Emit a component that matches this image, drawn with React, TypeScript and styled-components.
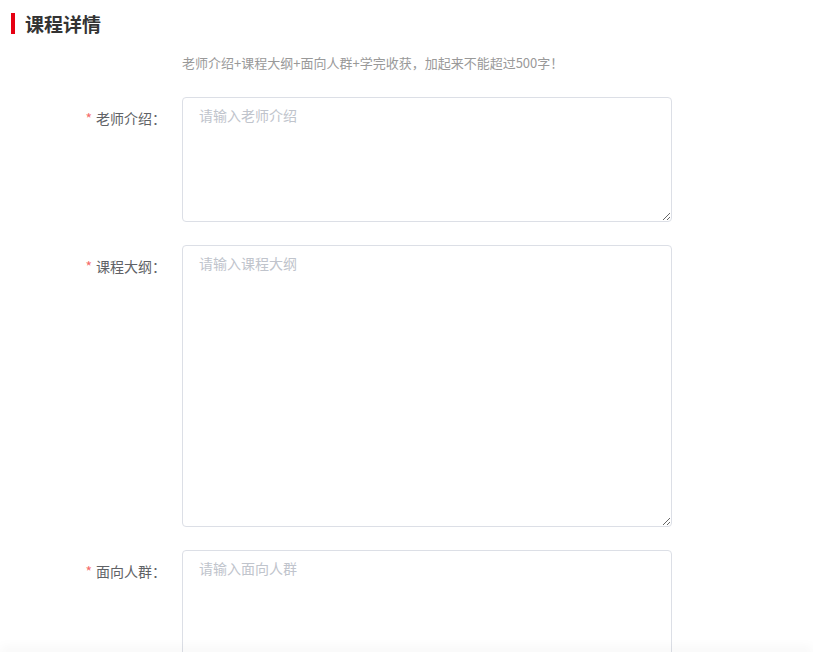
import React from 'react';
import styled, { createGlobalStyle } from 'styled-components';

const GlobalStyle = createGlobalStyle`
  html, body {
    margin: 0;
    padding: 0;
    background: #fff;
  }
  body {
    font-family: "Noto Sans CJK SC", "Liberation Sans", sans-serif;
  }
`;

const Page = styled.div`
  display: flex;
  flex-direction: column;
  height: 100vh;
  overflow: hidden;
`;

const Content = styled.div`
  flex: 1;
  overflow: hidden;
  padding-top: 13px;
`;

const Footer = styled.div`
  position: relative;
  z-index: 1;
  height: 7px;
  background: #fff;
  box-shadow: 0 -4px 12px rgba(0, 0, 0, 0.05);
`;

const SectionTitle = styled.h2`
  display: flex;
  align-items: center;
  gap: 10px;
  margin: 0 0 0 11px;
  font-size: 19px;
  line-height: 21px;
  font-weight: 700;
  color: #333;

  &::before {
    content: '';
    width: 4px;
    height: 21px;
    background: #e60012;
  }
`;

const Hint = styled.p`
  margin: 19px 0 0 182px;
  font-size: 13px;
  line-height: 20px;
  color: #999;
`;

const Form = styled.div`
  display: flex;
  flex-direction: column;
  gap: 23px;
  margin-top: 24px;
`;

const FormItem = styled.div`
  display: flex;
  align-items: flex-start;
`;

const Label = styled.label`
  width: 182px;
  box-sizing: border-box;
  padding-right: 16px;
  text-align: right;
  font-size: 14px;
  line-height: 42px;
  color: #606266;
`;

const Star = styled.span`
  color: #f56c6c;
  margin-right: 4px;
`;

const TextArea = styled.textarea<{ $h: number }>`
  display: block;
  width: 490px;
  height: ${(p) => p.$h}px;
  box-sizing: border-box;
  padding: 7px 16px;
  border: 1px solid #dcdfe6;
  border-radius: 4px;
  font-family: "Noto Sans CJK SC", "Liberation Sans", sans-serif;
  font-size: 14px;
  line-height: 21px;
  color: #606266;
  background: #fff;
  resize: vertical;
  outline: none;

  &::placeholder {
    color: #c0c4cc;
  }
`;

const fields = [
  { label: '老师介绍', height: 125 },
  { label: '课程大纲', height: 282 },
  { label: '面向人群', height: 125 },
];

export default function App() {
  return (
    <Page>
      <GlobalStyle />
      <Content>
        <SectionTitle>课程详情</SectionTitle>
        <Hint>老师介绍+课程大纲+面向人群+学完收获，加起来不能超过500字！</Hint>
        <Form>
          {fields.map((f) => (
            <FormItem key={f.label}>
              <Label>
                <Star>*</Star>
                {f.label}：
              </Label>
              <TextArea $h={f.height} placeholder={`请输入${f.label}`} />
            </FormItem>
          ))}
        </Form>
      </Content>
      <Footer />
    </Page>
  );
}
